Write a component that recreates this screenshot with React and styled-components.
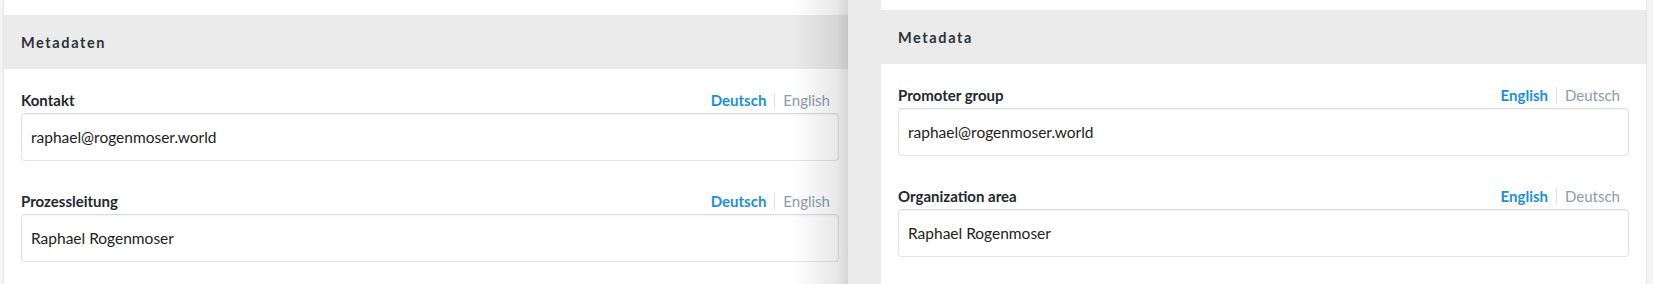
import React from 'react';
import styled, { createGlobalStyle } from 'styled-components';

const GlobalStyle = createGlobalStyle`
  html, body {
    margin: 0;
    padding: 0;
    background-color: #f4f4f4;
  }
  body {
    font-family: Lato, "Liberation Sans", sans-serif;
    color: #222;
  }
`;

const Screen = styled.div`
  display: flex;
  height: 284px;
  overflow: hidden;
  padding-left: 3px;
`;

const LeftPane = styled.div`
  position: relative;
  display: flex;
  flex: 0 0 845px;
  overflow: hidden;
  border-left: 1px solid #e6e6e6;
  box-sizing: border-box;

  &::after {
    content: '';
    position: absolute;
    top: 0;
    right: 0;
    bottom: 0;
    width: 56px;
    background: linear-gradient(to right, rgba(0, 0, 0, 0), rgba(0, 0, 0, 0.09) 80%, rgba(0, 0, 0, 0.17));
    pointer-events: none;
  }
`;

const RightPane = styled.div`
  flex: 1;
  display: flex;
  background: linear-gradient(to right, #ebebeb, #f3f3f3 40%, #f5f5f5);
  padding-left: 33px;
`;

const Card = styled.div`
  flex: 0 0 auto;
  width: ${(p) => p.$width}px;
  background-color: #fff;
  padding-top: ${(p) => p.$offset}px;
  border-right: ${(p) => (p.$edge ? '1px solid #e4e4e4' : 'none')};
  box-sizing: border-box;
`;

const Header = styled.div`
  height: 54px;
  display: flex;
  align-items: center;
  padding: 0 17px;
  background-color: #ebebeb;
  font-size: 14.5px;
  font-weight: 700;
  letter-spacing: 1.6px;
  color: #2c323d;
`;

const Body = styled.div`
  padding: 19px 17px 0 17px;
`;

const Field = styled.div`
  margin-bottom: 28px;
`;

const LabelRow = styled.div`
  height: 24px;
  margin-bottom: 1px;
  display: flex;
  align-items: center;
  justify-content: space-between;
  padding-right: 9px;
`;

const Label = styled.label`
  font-size: 15px;
  font-weight: 700;
  color: #23272e;
`;

const Languages = styled.div`
  display: flex;
  align-items: center;
`;

const Lang = styled.span`
  font-size: 15px;
  font-weight: ${(p) => (p.$active ? 700 : 400)};
  color: ${(p) => (p.$active ? '#1b90d8' : '#8d9bae')};
`;

const Divider = styled.span`
  width: 1px;
  height: 17px;
  margin: 0 8px;
  background-color: #e2e2e2;
`;

const Input = styled.div`
  height: 48px;
  box-sizing: border-box;
  display: flex;
  align-items: center;
  padding: 0 9px;
  border: 1px solid #e4e4e4;
  border-top-color: #dcdcdc;
  border-radius: 4px;
  box-shadow: inset 0 1px 2px rgba(0, 0, 0, 0.05);
  font-size: 15.5px;
  color: #222;
`;

const MetaField = ({ label, value, langs }) => (
  <Field>
    <LabelRow>
      <Label>{label}</Label>
      <Languages>
        <Lang $active>{langs[0]}</Lang>
        <Divider />
        <Lang>{langs[1]}</Lang>
      </Languages>
    </LabelRow>
    <Input>{value}</Input>
  </Field>
);

const MetaCard = ({ title, fields, langs, width, offset, edge }) => (
  <Card $width={width} $offset={offset} $edge={edge}>
    <Header>{title}</Header>
    <Body>
      {fields.map((f) => (
        <MetaField key={f.label} label={f.label} value={f.value} langs={langs} />
      ))}
    </Body>
  </Card>
);

const App = () => (
  <>
    <GlobalStyle />
    <Screen>
      <LeftPane>
        <MetaCard
          title="Metadaten"
          langs={['Deutsch', 'English']}
          width={852}
          offset={15}
          fields={[
            { label: 'Kontakt', value: 'raphael@rogenmoser.world' },
            { label: 'Prozessleitung', value: 'Raphael Rogenmoser' },
          ]}
        />
      </LeftPane>
      <RightPane>
        <MetaCard
          title="Metadata"
          langs={['English', 'Deutsch']}
          width={766}
          offset={10}
          edge
          fields={[
            { label: 'Promoter group', value: 'raphael@rogenmoser.world' },
            { label: 'Organization area', value: 'Raphael Rogenmoser' },
          ]}
        />
      </RightPane>
    </Screen>
  </>
);

export default App;
